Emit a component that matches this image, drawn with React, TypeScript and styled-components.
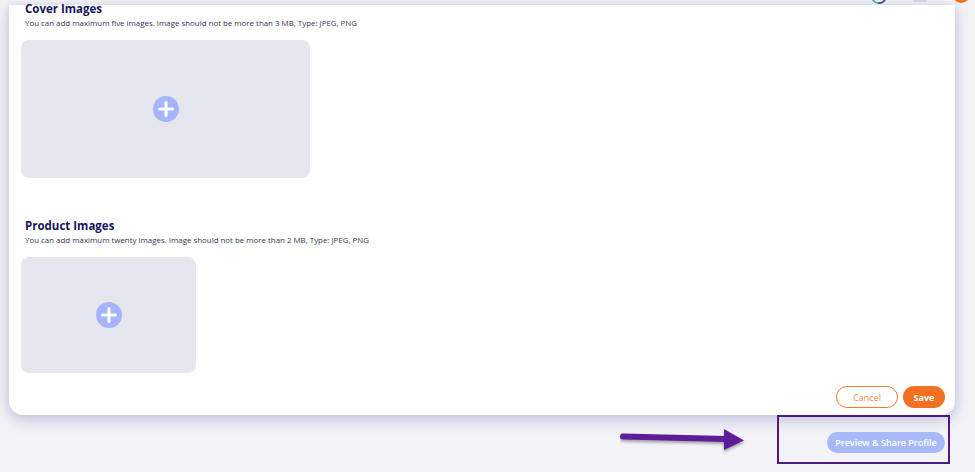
import React from "react";
import styled, { createGlobalStyle } from "styled-components";

const GlobalStyle = createGlobalStyle`
  html, body { margin: 0; padding: 0; }
  body {
    background: #f3f3f7;
    font-family: "Open Sans", "Liberation Sans", sans-serif;
  }
  * { box-sizing: border-box; }
`;

const Page = styled.div`
  width: 975px;
  height: 472px;
  overflow: hidden;
  display: flex;
  flex-direction: column;
  background: #f3f3f7;
`;

const TopBar = styled.header`
  height: 5px;
  flex: none;
  display: flex;
  justify-content: flex-end;
  align-items: flex-end;
  gap: 25px;
  padding-right: 5px;
  overflow: hidden;
  background: #f4f4f7;
`;

const TopItem = styled.div<{ $drop: number }>`
  flex: none;
  margin-bottom: ${(p) => p.$drop}px;
  display: flex;
`;

const TopMark = styled.span`
  width: 14px;
  height: 8px;
  border-radius: 2px;
  background: #dadae3;
`;

const Avatar = styled.div`
  width: 18px;
  height: 18px;
  border-radius: 50%;
  background: #f47321;
`;

const Body = styled.div`
  flex: 1;
  display: flex;
  min-height: 0;
`;

const Main = styled.main`
  flex: 1;
  padding: 0 13px 0 9px;
  display: flex;
  flex-direction: column;
`;

const Gutter = styled.div`
  width: 7px;
  flex: none;
  background: #f4f4f7;
  position: relative;
  z-index: 2;
`;

const Card = styled.section`
  background: #ffffff;
  border-radius: 0 0 14px 14px;
  box-shadow: 0 6px 16px rgba(96, 96, 170, 0.28), 0 0 10px rgba(120, 120, 190, 0.18);
  padding: 0 10px 7px 12px;
  display: flex;
  flex-direction: column;
  position: relative;
  z-index: 1;
`;

const SectionTitle = styled.h2<{ $top: number }>`
  margin: ${(p) => p.$top}px 0 0 4px;
  font-size: 11.5px;
  line-height: 12px;
  font-weight: 700;
  color: #16165c;
`;

const Hint = styled.p`
  margin: 3px 0 0 4px;
  font-size: 7.9px;
  line-height: 10px;
  color: #363654;
`;

const Dropzone = styled.div<{ $w: number; $h: number }>`
  margin-top: 12px;
  width: ${(p) => p.$w}px;
  height: ${(p) => p.$h}px;
  border-radius: 8px;
  background: #e6e6ee;
  display: flex;
  align-items: center;
  justify-content: center;
`;

const Footer = styled.div`
  margin-top: 13px;
  display: flex;
  justify-content: flex-end;
  gap: 5px;
`;

const Button = styled.button<{ $variant: "outline" | "solid" | "soft" }>`
  height: 22px;
  border-radius: 11px;
  font-family: "Open Sans", "Liberation Sans", sans-serif;
  font-size: 9px;
  line-height: 1;
  cursor: pointer;
  display: flex;
  align-items: center;
  justify-content: center;
  padding: 0;
  border: ${(p) => (p.$variant === "outline" ? "1.5px solid #f37a2c" : "none")};
  background: ${(p) =>
    p.$variant === "outline" ? "#ffffff" : p.$variant === "solid" ? "#f36f21" : "#a8b9fb"};
  color: ${(p) => (p.$variant === "outline" ? "#f2884a" : "#ffffff")};
  font-weight: ${(p) => (p.$variant === "outline" ? 400 : p.$variant === "solid" ? 700 : 600)};
`;

const CancelButton = styled(Button)`
  width: 62px;
`;

const SaveButton = styled(Button)`
  width: 42px;
`;

const PreviewButton = styled(Button)`
  width: 118px;
  height: 21px;
`;

const BottomBar = styled.div`
  display: flex;
  justify-content: flex-end;
  align-items: flex-start;
  gap: 31px;
  padding-right: 5px;
  position: relative;
  z-index: 2;
`;

const ArrowWrap = styled.div`
  margin-top: 13px;
  display: flex;
`;

const Highlight = styled.div`
  width: 173px;
  height: 49px;
  border: 2px solid #4b1b80;
  display: flex;
  justify-content: flex-end;
  align-items: flex-start;
  padding: 15px 3px 0 0;
`;

const PlusIcon = () => (
  <svg width="26" height="26" viewBox="0 0 26 26" aria-hidden="true">
    <circle cx="13" cy="13" r="13" fill="#a6b5fb" />
    <path d="M13 6.5v13M6.5 13h13" stroke="#ffffff" strokeWidth="3" strokeLinecap="round" />
  </svg>
);

const SyncIcon = () => (
  <svg width="18" height="18" viewBox="0 0 18 18" aria-hidden="true">
    <path d="M2 11a7 7 0 0 0 6 6" stroke="#4caf8a" strokeWidth="1.6" fill="none" />
    <path d="M8 17a7 7 0 0 0 8-7" stroke="#2b3f8f" strokeWidth="1.6" fill="none" />
  </svg>
);

const Arrow = () => (
  <svg width="126" height="26" viewBox="0 0 126 26" aria-hidden="true">
    <defs>
      <filter id="arrowShadow" x="-10%" y="-40%" width="120%" height="200%">
        <feDropShadow dx="0" dy="2" stdDeviation="1.5" floodColor="#000" floodOpacity="0.35" />
      </filter>
    </defs>
    <g filter="url(#arrowShadow)">
      <path d="M3 8.5 L106 11" stroke="#5f1d98" strokeWidth="6" strokeLinecap="round" fill="none" />
      <path d="M104 1 L124 12.5 L104 22 Z" fill="#5f1d98" />
    </g>
  </svg>
);

export default function App() {
  return (
    <>
      <GlobalStyle />
      <Page>
        <TopBar>
          <TopItem $drop={1}>
            <SyncIcon />
          </TopItem>
          <TopItem $drop={3}>
            <TopMark />
          </TopItem>
          <TopItem $drop={2}>
            <Avatar />
          </TopItem>
        </TopBar>
        <Body>
          <Main>
            <Card>
              <SectionTitle $top={-2}>Cover Images</SectionTitle>
              <Hint>You can add maximum five images. Image should not be more than 3 MB, Type: JPEG, PNG</Hint>
              <Dropzone $w={289} $h={138}>
                <PlusIcon />
              </Dropzone>

              <SectionTitle $top={42}>Product Images</SectionTitle>
              <Hint>You can add maximum twenty images. Image should not be more than 2 MB, Type: JPEG, PNG</Hint>
              <Dropzone $w={175} $h={116}>
                <PlusIcon />
              </Dropzone>

              <Footer>
                <CancelButton $variant="outline">Cancel</CancelButton>
                <SaveButton $variant="solid">Save</SaveButton>
              </Footer>
            </Card>
            <BottomBar>
              <ArrowWrap>
                <Arrow />
              </ArrowWrap>
              <Highlight>
                <PreviewButton $variant="soft">Preview &amp; Share Profile</PreviewButton>
              </Highlight>
            </BottomBar>
          </Main>
          <Gutter />
        </Body>
      </Page>
    </>
  );
}
